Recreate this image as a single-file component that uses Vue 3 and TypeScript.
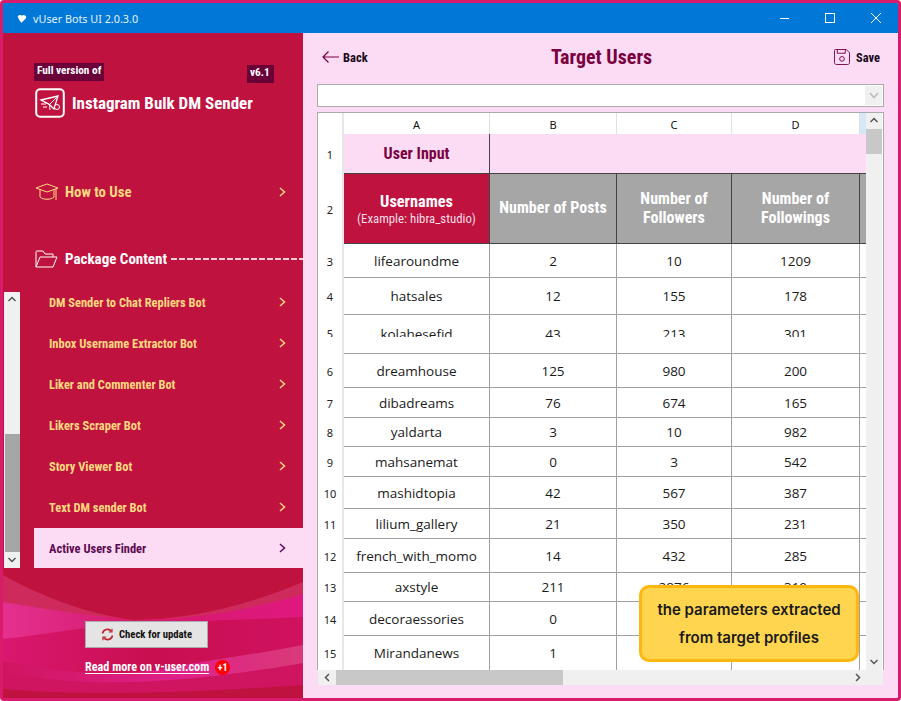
<script setup lang="ts">
interface Row { n: number; h: number; a: string; b: string; c: string; d: string; clip?: boolean }
const rows: Row[] = [
  { n: 3, h: 34, a: 'lifearoundme', b: '2', c: '10', d: '1209' },
  { n: 4, h: 37, a: 'hatsales', b: '12', c: '155', d: '178' },
  { n: 5, h: 39, a: 'kolahesefid', b: '43', c: '213', d: '301', clip: true },
  { n: 6, h: 34, a: 'dreamhouse', b: '125', c: '980', d: '200' },
  { n: 7, h: 30, a: 'dibadreams', b: '76', c: '674', d: '165' },
  { n: 8, h: 29, a: 'yaldarta', b: '3', c: '10', d: '982' },
  { n: 9, h: 30, a: 'mahsanemat', b: '0', c: '3', d: '542' },
  { n: 10, h: 32, a: 'mashidtopia', b: '42', c: '567', d: '387' },
  { n: 11, h: 30, a: 'lilium_gallery', b: '21', c: '350', d: '231' },
  { n: 12, h: 34, a: 'french_with_momo', b: '14', c: '432', d: '285' },
  { n: 13, h: 29, a: 'axstyle', b: '211', c: '2876', d: '319' },
  { n: 14, h: 34, a: 'decoraessories', b: '0', c: '', d: '' },
  { n: 15, h: 35, a: 'Mirandanews', b: '1', c: '', d: '' },
]
const items = [
  'DM Sender to Chat Repliers Bot',
  'Inbox Username Extractor Bot',
  'Liker and Commenter Bot',
  'Likers Scraper Bot',
  'Story Viewer Bot',
  'Text DM sender Bot',
  'Active Users Finder',
]
</script>

<template>
  <div class="window">
    <header class="titlebar">
      <svg class="app-icon" width="10" height="9" viewBox="0 0 14 12"><path d="M1 3 C3 0 6 1 7 2 C9 0 12 1 13 4 C13 7 9 9 6 12 C4 9 2 7 1 3Z" fill="#fff" /></svg>
      <span class="app-name">vUser Bots UI 2.0.3.0</span>
      <span class="controls">
        <svg width="9" height="10" viewBox="0 0 9 10"><path d="M0 5.500H9" stroke="#fff" fill="none" /></svg>
        <svg width="10" height="10" viewBox="0 0 10 10"><rect x=".5" y=".5" width="9" height="9" stroke="#fff" fill="none" /></svg>
        <svg width="10" height="10" viewBox="0 0 10 10"><path d="M0 0L10 10M10 0L0 10" stroke="#fff" fill="none" /></svg>
      </span>
    </header>
    <div class="body">
      <aside class="sidebar">
        <svg class="waves" width="300" height="125" viewBox="0 0 300 125" preserveAspectRatio="none">
          <defs>
            <linearGradient id="g1" x1="0" x2="1" y1="0" y2="0">
              <stop offset="0" stop-color="#e5308e" />
              <stop offset=".45" stop-color="#d41a6c" />
              <stop offset="1" stop-color="#e0187f" />
            </linearGradient>
            <linearGradient id="g2" x1="0" x2="1" y1="0" y2="0">
              <stop offset="0" stop-color="#d9176f" />
              <stop offset=".5" stop-color="#c90f50" />
              <stop offset="1" stop-color="#d0125f" />
            </linearGradient>
            <linearGradient id="g3" x1="0" x2="1" y1="0" y2="0">
              <stop offset="0" stop-color="#d01560" />
              <stop offset=".6" stop-color="#e0218a" />
              <stop offset="1" stop-color="#d93a78" />
            </linearGradient>
          </defs>
          <path d="M0 2 C40 25 90 42 130 47 C190 47 250 30 300 9 V125 H0Z" fill="#cf2a5c" />
          <path d="M0 29 C40 36 90 43 130 47 C190 47 250 36 300 21 V125 H0Z" fill="url(#g1)" />
          <path d="M0 66 C40 62 90 52 140 50 C200 48 260 46 300 44 V125 H0Z" fill="url(#g2)" />
          <path d="M0 88 C60 100 120 106 180 92 C230 84 270 78 300 72 V125 H0Z" fill="url(#g3)" />
          <path d="M0 100 C70 112 150 116 300 90 V125 H0Z" fill="#cf1460" />
          <path d="M0 116 C70 122 160 122 300 112 V125 H0Z" fill="#c0123f" />
        </svg>
        <div class="badges">
          <span class="badge">Full version of</span>
          <span class="badge version">v6.1</span>
        </div>
        <div class="product">
          <svg class="logo" width="30" height="30" viewBox="0 0 30 30">
            <rect x="1.200" y="1.200" width="27.600" height="27.600" rx="4" fill="none" stroke="#fff" stroke-width="2" />
            <path d="M6 12L23 8L19 21L14.500 16.500Z" fill="none" stroke="#fff" stroke-width="1.300" />
            <path d="M6 12L14.500 16.500L23 8M14.500 16.500L15 22M6 16H11M8 19H12" fill="none" stroke="#fff" stroke-width="1" />
            <circle cx="22" cy="19" r="2.500" fill="#bf123f" stroke="#fff" />
          </svg>
          <span class="product-name">Instagram Bulk DM Sender</span>
        </div>
        <div class="how">
          <svg width="24" height="18" viewBox="0 0 24 18" fill="none" stroke="#ffd97f">
            <path d="M1 5L12 1L23 5L12 9Z" />
            <path d="M5 7V14C8 17 16 17 19 14V7M21 6V14M21 14V17" />
          </svg>
          <span class="how-label">How to Use</span>
          <svg class="chev" width="7" height="10" viewBox="0 0 7 10"><path d="M1 1L5.500 5L1 9" fill="none" stroke="currentColor" stroke-width="1.500" /></svg>
        </div>
        <div class="package">
          <svg width="23" height="18" viewBox="0 0 23 18" fill="none" stroke="#fff">
            <path d="M1 17V2C1 1 2 1 2 1H8L10 4H18V7M1 17H18L22 7H5Z" />
          </svg>
          <span class="package-label">Package Content</span>
          <span class="dashes"></span>
        </div>
        <div class="menu-area">
          <div class="side-scroll">
            <svg width="16" height="15" viewBox="0 0 16 15"><path d="M4.500 9L8 5.500L11.500 9" fill="none" stroke="#555" stroke-width="1.500" /></svg>
            <span class="side-track"><span class="side-thumb"></span></span>
            <svg width="16" height="16" viewBox="0 0 16 16"><path d="M4.500 6L8 9.500L11.500 6" fill="none" stroke="#555" stroke-width="1.500" /></svg>
          </div>
          <ul class="menu">
            <li v-for="(item, i) in items" :key="item" class="menu-item" :class="{ active: i === items.length - 1 }">
              <span>{{ item }}</span>
              <svg class="chev" width="7" height="10" viewBox="0 0 7 10"><path d="M1 1L5.500 5L1 9" fill="none" stroke="currentColor" stroke-width="1.500" /></svg>
            </li>
          </ul>
        </div>
        <button class="update" type="button">
          <svg width="13" height="13" viewBox="0 0 13 13" fill="none" stroke="#c0272d" stroke-width="1.600">
            <path d="M1.500 5.500A5 5 0 0 1 10.500 3.500M11.500 7.500A5 5 0 0 1 2.500 9.500" />
            <path d="M11 .8V4H7.800M2 12.200V9H5.200" stroke-width="1.200" />
          </svg>
          Check for update
        </button>
        <div class="read-more">
          <a class="read-link">Read more on v-user.com</a>
          <span class="plus">+1</span>
        </div>
      </aside>

      <main class="main">
        <div class="top">
          <div class="back">
            <svg width="17" height="12" viewBox="0 0 17 12" fill="none" stroke="#7a0040" stroke-width="1.200"><path d="M17 6H1M6.500 .5L1 6L6.500 11.500" /></svg>
            <span>Back</span>
          </div>
          <h1 class="title">Target Users</h1>
          <div class="save">
            <svg width="16" height="16" viewBox="0 0 17 17" fill="none" stroke="#7a0040"><path d="M1.500 .5H13L16.500 4V14.500C16.500 15.500 15.500 16.500 14.500 16.500H2.500C1.500 16.500 .5 15.500 .5 14.500V1.500C.5 1 1 .5 1.500 .5Z" /><path d="M3.500 .5V4.500H12V.5" /><circle cx="8.500" cy="10.500" r="2.500" /></svg>
            <span>Save</span>
          </div>
        </div>
        <div class="combo">
          <span class="combo-btn"><svg width="10" height="7" viewBox="0 0 10 7"><path d="M1 1L5 5.500L9 1" fill="none" stroke="#bbb" stroke-width="1.500" /></svg></span>
        </div>
        <div class="sheet">
          <div class="sheet-grid">
            <table class="table">
              <colgroup>
                <col class="c-head" /><col class="c-a" /><col class="c-b" /><col class="c-c" /><col class="c-d" /><col class="c-e" />
              </colgroup>
              <tbody>
                <tr class="letters">
                  <td class="rowhead"></td><td>A</td><td>B</td><td>C</td><td>D</td><td class="e-letter"></td>
                </tr>
                <tr style="height: 40px">
                  <td class="rowhead">1</td>
                  <td class="input-a">User Input</td>
                  <td class="input-rest" colspan="4"></td>
                </tr>
                <tr style="height: 70px">
                  <td class="rowhead">2</td>
                  <td class="head-red"><div class="usernames">Usernames</div><div class="example">(Example: hibra_studio)</div></td>
                  <td class="head-gray">Number of Posts</td>
                  <td class="head-gray">Number of<br />Followers</td>
                  <td class="head-gray">Number of<br />Followings</td>
                  <td class="head-gray e"></td>
                </tr>
                <tr v-for="r in rows" :key="r.n" :style="{ height: r.h + 'px' }">
                  <td class="rowhead" :class="{ cliptd: r.clip }"><div v-if="r.clip" class="clipped">{{ r.n }}</div><template v-else>{{ r.n }}</template></td>
                  <td class="cell" :class="{ cliptd: r.clip }"><div v-if="r.clip" class="clipped">{{ r.a }}</div><template v-else>{{ r.a }}</template></td>
                  <td class="cell" :class="{ cliptd: r.clip }"><div v-if="r.clip" class="clipped">{{ r.b }}</div><template v-else>{{ r.b }}</template></td>
                  <td class="cell" :class="{ cliptd: r.clip }"><div v-if="r.clip" class="clipped">{{ r.c }}</div><template v-else>{{ r.c }}</template></td>
                  <td class="cell" :class="{ cliptd: r.clip }"><div v-if="r.clip" class="clipped">{{ r.d }}</div><template v-else>{{ r.d }}</template></td>
                  <td class="cell e"></td>
                </tr>
              </tbody>
            </table>
            <div class="vscroll">
              <svg width="16" height="16" viewBox="0 0 16 16"><path d="M4.500 9L8 5.500L11.500 9" fill="none" stroke="#555" stroke-width="1.500" /></svg>
              <span class="v-track"><span class="v-thumb"></span></span>
              <svg width="16" height="16" viewBox="0 0 16 16"><path d="M4.500 6L8 9.500L11.500 6" fill="none" stroke="#555" stroke-width="1.500" /></svg>
            </div>
          </div>
          <div class="hscroll">
            <svg width="18" height="15" viewBox="0 0 18 15"><path d="M11 4L7.500 7.500L11 11" fill="none" stroke="#555" stroke-width="1.500" /></svg>
            <span class="h-track"><span class="h-thumb"></span></span>
            <svg width="17" height="15" viewBox="0 0 17 15"><path d="M7 4L10.500 7.500L7 11" fill="none" stroke="#555" stroke-width="1.500" /></svg>
          </div>
          <div class="note">the parameters extracted<br />from target profiles</div>
        </div>
      </main>
    </div>
  </div>
</template>

<style>
html, body { margin: 0; padding: 0; background: #fff; }
</style>

<style scoped>
.window {
  width: 901px;
  height: 701px;
  box-sizing: border-box;
  border: 3px solid #d81b6a;
  border-radius: 4px;
  display: flex;
  flex-direction: column;
  overflow: hidden;
  background: #fcdcf4;
  font-family: "Roboto Condensed", "Liberation Sans Narrow", Roboto, sans-serif;
}
.titlebar {
  height: 30px;
  flex: none;
  background: #0078d7;
  display: flex;
  align-items: center;
  color: #fff;
  padding-left: 14px;
}
.app-icon { margin-right: 6px; }
.app-name { font: 10.800px "Noto Sans", sans-serif; color: #e8f2fb; }
.controls { margin-left: auto; display: flex; align-items: center; gap: 36px; padding-right: 17px; }
.body { flex: 1; display: flex; min-height: 0; }
.sidebar {
  width: 300px;
  flex: none;
  background: #bf123f;
  position: relative;
  display: flex;
  flex-direction: column;
  padding-top: 30px;
  box-sizing: border-box;
  overflow: hidden;
}
.waves { position: absolute; left: 0; bottom: 0; }
.sidebar > *:not(.waves) { position: relative; }
.badges { display: flex; justify-content: space-between; align-items: flex-start; width: 240px; margin-left: 31px; }
.badge { background: #6b0038; color: #fff; font-size: 11.300px; font-weight: 700; height: 18px; line-height: 16px; padding: 0 3px; box-sizing: border-box; width: 70px; white-space: nowrap; }
.badge.version { margin-top: 2px; width: 27px; }
.product { display: flex; align-items: center; gap: 7px; margin: 5px 0 0 32px; }
.product-name { color: #fff; font-size: 17px; font-weight: 700; }
.how { display: flex; align-items: center; height: 24px; margin: 62px 0 0 32px; color: #ffd97f; }
.how-label { margin-left: 6px; font-size: 14.800px; font-weight: 700; }
.how .chev { margin-left: auto; margin-right: 17px; }
.package { display: flex; align-items: center; height: 24px; margin: 43px 0 0 32px; color: #fff; }
.package-label { margin-left: 7px; font-size: 15px; font-weight: 700; white-space: nowrap; }
.dashes { flex: 1; margin-left: 4px; height: 2px; background: repeating-linear-gradient(90deg, rgba(255, 255, 255, .8) 0 6px, transparent 6px 8px); }
.menu-area { display: flex; height: 276px; margin-top: 21px; padding-left: 1px; }
.side-scroll { width: 16px; flex: none; background: #f0f0f0; display: flex; flex-direction: column; }
.side-scroll svg { flex: none; }
.side-track { flex: 1; position: relative; }
.side-thumb { position: absolute; left: 1px; right: 0; top: 127px; bottom: 0; background: #a6a6a6; }
.menu { list-style: none; margin: -10px 0 0 14px; padding: 0; flex: 1; display: flex; flex-direction: column; gap: 1px; overflow: hidden; }
.menu-item {
  height: 40px;
  flex: none;
  display: flex;
  align-items: center;
  justify-content: space-between;
  padding: 0 17px 0 15px;
  color: #ffd97f;
  font-size: 12.450px;
  font-weight: 700;
}
.menu-item.active { background: #fcdcf4; color: #5c0a52; }
.update {
  margin: 53px 0 0 82px;
  width: 123px;
  height: 27px;
  background: #e4e4e4;
  border: 1px solid #aaa;
  display: flex;
  align-items: center;
  justify-content: center;
  gap: 5px;
  padding: 0;
  color: #111;
  font: 700 10.700px "Roboto Condensed", "Liberation Sans Narrow", Roboto, sans-serif;
}
.read-more { display: flex; align-items: center; margin: 11px 0 0 82px; height: 16px; gap: 6px; }
.read-link { color: #fff; font-size: 12.200px; font-weight: 700; text-decoration: underline; text-underline-offset: 2px; }
.plus { width: 15px; height: 15px; border-radius: 50%; background: #f00; color: #fff; font-size: 10px; font-weight: 700; text-align: center; line-height: 15px; }

.main { flex: 1; min-width: 0; padding: 0 14px; box-sizing: border-box; display: flex; flex-direction: column; }
.top { display: grid; grid-template-columns: 1fr auto 1fr; align-items: center; height: 24px; margin: 12px 0 15px; }
.back { display: flex; align-items: center; gap: 4px; padding-left: 5px; font-size: 12.500px; font-weight: 700; color: #1a0a20; }
.title { margin: 0 0 0 2px; color: #7a0040; font-size: 20px; font-weight: 700; }
.save { display: flex; align-items: center; justify-content: flex-end; gap: 6px; padding-right: 4px; font-size: 12.500px; font-weight: 700; color: #1a0a20; }
.combo { height: 23px; flex: none; box-sizing: border-box; border: 1px solid #aaa; background: #fff; display: flex; justify-content: flex-end; padding: 1px; margin-bottom: 5px; }
.combo-btn { width: 17px; background: #f0f0f0; display: flex; align-items: center; justify-content: center; }
.sheet { height: 573px; flex: none; box-sizing: border-box; display: flex; flex-direction: column; position: relative; }
.sheet-grid { flex: 1; min-height: 0; display: flex; overflow: hidden; background: #fff; border: 1px solid #aaa; border-bottom: 0; }
.table { table-layout: fixed; width: 548px; border-collapse: separate; border-spacing: 0; flex: none; align-self: flex-start; font: 13.500px "Open Sans", sans-serif; color: #1a1a1a; text-align: center; }
.c-head { width: 26px; } .c-a { width: 146px; } .c-b { width: 127px; } .c-c { width: 115px; } .c-d { width: 128px; } .c-e { width: 6px; }
.table td { padding: 0; overflow: hidden; white-space: nowrap; box-sizing: border-box; }
.letters { height: 21px; }
.letters td { font: 11px "Noto Sans", sans-serif; color: #111; border-right: 1px solid #e0e0e0; padding-top: 1px; }
.letters .e-letter { background: #d5e8f8; border: 0; }
.letters .rowhead { border-right: 2px solid #e8e8e8; }
.table td.rowhead { font: 11px "Noto Sans", sans-serif; color: #222; border-right: 2px solid #e8e8e8; }
.input-a { background: #fcdcf4; color: #7a0040; font: 700 16px "Roboto Condensed", "Liberation Sans Narrow", Roboto, sans-serif; border-right: 1px solid #444; border-bottom: 1px solid #444; }
.input-rest { background: #fcdcf4; border-bottom: 1px solid #444; }
.head-red { background: #bf123f; color: #fff; border-right: 1px solid #444; border-bottom: 1px solid #444; }
.usernames { font: 700 16.300px "Roboto Condensed", "Liberation Sans Narrow", Roboto, sans-serif; }
.example { font: 400 12.800px "Roboto Condensed", "Liberation Sans Narrow", Roboto, sans-serif; color: #f7dfe5; }
.head-gray { background: #a6a6a6; color: #fff; font: 700 16px/19px "Roboto Condensed", "Liberation Sans Narrow", Roboto, sans-serif; border-right: 1px solid #444; border-bottom: 1px solid #444; padding-bottom: 2px !important; }
.head-gray.e { border-right: 0; }
.cell { border-right: 1px solid #a0a0a0; border-bottom: 1px solid #a0a0a0; }
.cell.e { border-right: 0; }
.table td.cliptd { vertical-align: top; }
.clipped { height: 22px; line-height: 38px; overflow: hidden; }
.vscroll { width: 16px; flex: none; background: #f0f0f0; display: flex; flex-direction: column; }
.vscroll svg { flex: none; }
.v-track { flex: 1; position: relative; }
.v-thumb { position: absolute; left: 0; right: 0; top: 0; height: 25px; background: #c8c8c8; }
.hscroll { height: 15px; flex: none; background: #f0f0f0; display: flex; margin: 0 1px; padding-right: 17px; }
.hscroll svg { flex: none; }
.h-track { flex: 1; position: relative; }
.h-thumb { position: absolute; left: 0; top: 0; bottom: 0; width: 227px; background: #c8c8c8; }
.note {
  position: absolute;
  left: 322px;
  top: 473px;
  width: 220px;
  height: 77px;
  box-sizing: border-box;
  background: #ffd54f;
  border: 3px solid #ffb70f;
  border-radius: 10px;
  font: 600 15px/28px Inter, sans-serif;
  color: #1a1a1a;
  text-align: center;
  padding-top: 8px;
}
</style>
